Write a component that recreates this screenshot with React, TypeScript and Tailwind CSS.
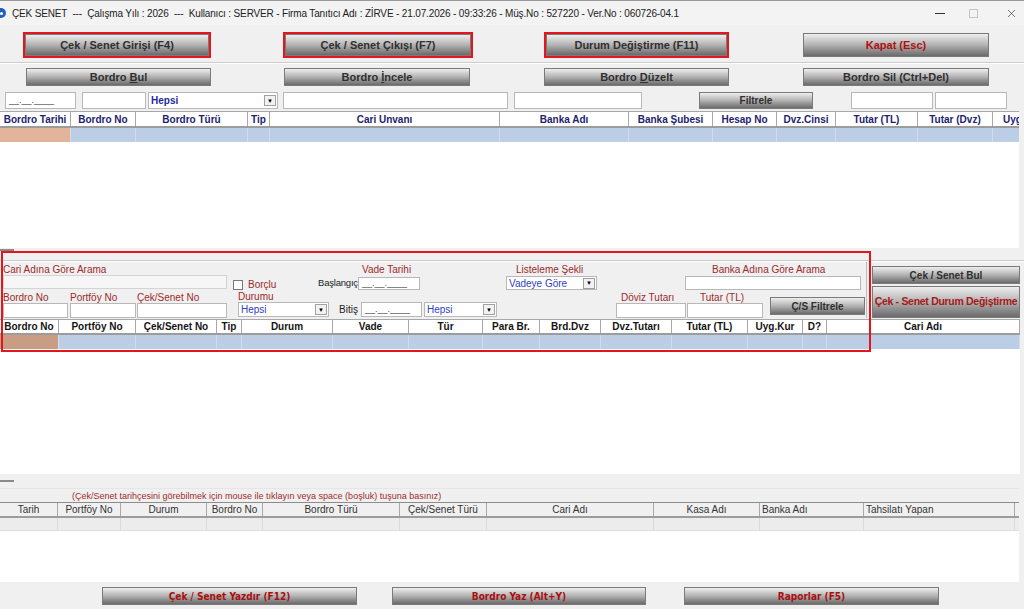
import { X } from "lucide-react";
import type { ReactNode } from "react";

// Delphi-style "ÇEK SENET" form, laid out row by row.

const topCols = [
  "Bordro Tarihi", "Bordro No", "Bordro Türü", "Tip", "Cari Unvanı", "Banka Adı",
  "Banka Şubesi", "Hesap No", "Dvz.Cinsi", "Tutar (TL)", "Tutar (Dvz)", "Uyg.Kur",
];
const midCols = [
  "Bordro No", "Portföy No", "Çek/Senet No", "Tip", "Durum", "Vade", "Tür", "Para Br.",
  "Brd.Dvz", "Dvz.Tutarı", "Tutar (TL)", "Uyg.Kur", "D?", "Cari Adı",
];
const histCols = [
  "Tarih", "Portföy No", "Durum", "Bordro No", "Bordro Türü", "Çek/Senet Türü",
  "Cari Adı", "Kasa Adı", "Banka Adı", "Tahsilatı Yapan",
];

function Btn({
  children,
  className = "",
  tone = "text-[#303030]",
}: {
  children: ReactNode;
  className?: string;
  tone?: string;
}) {
  return (
    <div
      className={`flex items-center justify-center overflow-hidden whitespace-nowrap border border-[#7a7a7a] bg-linear-to-b from-[#eeeeee] via-[#b2b2b2] to-[#6b6b6b] font-bold ${tone} ${className}`}
    >
      {children}
    </div>
  );
}

function Field({ className = "", children }: { className?: string; children?: ReactNode }) {
  return (
    <div
      className={`flex items-center overflow-hidden whitespace-nowrap border border-[#b8b8b8] bg-white px-[3px] text-[9px] text-[#444] ${className}`}
    >
      {children}
    </div>
  );
}

function Combo({ value, className = "", bold = false }: { value: string; className?: string; bold?: boolean }) {
  return (
    <div className={`flex items-center border border-[#b8b8b8] bg-white ${className}`}>
      <span
        className={`flex-1 pl-[2px] text-[10px] ${bold ? "font-bold text-[#1e2a9c]" : "text-[#3040c0]"}`}
      >
        {value}
      </span>
      <span className="mr-[1px] flex h-[11px] w-[12px] items-center justify-center border border-[#a0a0a0] bg-[#f2f2f2] text-[6px] leading-none text-black">
        ▼
      </span>
    </div>
  );
}

const date = "__.__.____";

function Label({ children, className = "" }: { children: ReactNode; className?: string }) {
  return <div className={`h-[11px] whitespace-nowrap text-[10px] leading-[11px] text-[#9c2a2a] ${className}`}>{children}</div>;
}

export default function App() {
  return (
    <div className="flex h-[609px] w-[1024px] flex-col overflow-hidden bg-[#f0f0f0] font-['Liberation_Sans',Arial,sans-serif] text-[#222]">
      {/* title bar */}
      <div className="flex h-[25px] shrink-0 items-center border-t border-[#9a9a9a] bg-[#f3f3f3]">
        <div className="-ml-[4px] flex h-[10px] w-[10px] items-center justify-center rounded-full bg-[#1f5fbf]">
          <div className="h-[3px] w-[3px] rounded-full bg-white" />
        </div>
        <span className="ml-[6px] whitespace-nowrap text-[10px] tracking-[-0.15px] text-[#222]">
          ÇEK SENET &nbsp;--- &nbsp;Çalışma Yılı : 2026 &nbsp;--- &nbsp;Kullanıcı : SERVER - Firma Tanıtıcı Adı : ZİRVE - 21.07.2026 - 09:33:26 - Müş.No : 527220 - Ver.No : 060726-04.1
        </span>
        <div className="ml-auto flex items-center">
          <div className="h-px w-[10px] bg-[#333]" />
          <div className="ml-[24px] h-[9px] w-[9px] border border-[#c4c4c4]" />
          <X className="ml-[27px] mr-[6px] h-[13px] w-[13px] text-[#333]" strokeWidth={1.2} />
        </div>
      </div>

      {/* main action buttons */}
      <div className="mt-[7px] flex h-[26px] shrink-0 pl-[23px]">
        <div className="w-[188px] border-2 border-[#e3161d]">
          <Btn className="h-full text-[11px]">Çek / Senet Girişi (F4)</Btn>
        </div>
        <div className="ml-[72px] w-[190px] border-2 border-[#e3161d]">
          <Btn className="h-full text-[11px]">Çek / Senet Çıkışı (F7)</Btn>
        </div>
        <div className="ml-[71px] w-[185px] border-2 border-[#e3161d]">
          <Btn className="h-full text-[11px]">Durum Değiştirme (F11)</Btn>
        </div>
        <div className="ml-[74px] w-[186px] py-[1px]">
          <Btn className="h-full text-[11px]" tone="text-[#b01010]">
            Kapat (Esc)
          </Btn>
        </div>
      </div>

      <div className="mt-[4px] h-[2px] shrink-0 border-t border-b border-t-[#cdcdcd] border-b-white" />

      {/* bordro buttons */}
      <div className="mt-[4px] flex h-[18px] shrink-0 pl-[26px] text-[11px]">
        <Btn className="w-[185px]">
          Bordro&nbsp;<span className="underline">B</span>ul
        </Btn>
        <Btn className="ml-[73px] w-[186px]">
          Bordro&nbsp;<span className="underline">İ</span>ncele
        </Btn>
        <Btn className="ml-[74px] w-[185px]">
          Bordro&nbsp;<span className="underline">D</span>üzelt
        </Btn>
        <Btn className="ml-[74px] w-[186px]">Bordro Sil (Ctrl+Del)</Btn>
      </div>

      {/* bordro filters */}
      <div className="mt-[6px] flex h-[17px] shrink-0 pl-[5px]">
        <Field className="w-[71px]">{date}</Field>
        <Field className="ml-[6px] w-[64px]" />
        <Combo value="Hepsi" bold className="ml-[2px] w-[130px]" />
        <Field className="ml-[5px] w-[225px]" />
        <Field className="ml-[6px] w-[128px]" />
        <Btn className="ml-[57px] w-[114px] text-[10px]">Filtrele</Btn>
        <Field className="ml-[38px] w-[82px]" />
        <Field className="ml-[2px] w-[72px]" />
      </div>

      {/* bordro grid */}
      <div className="mt-[2px] flex h-[137px] w-[1019px] shrink-0 flex-col overflow-hidden border-t border-[#a8a8a8] bg-white">
        <div className="grid h-[16px] shrink-0 grid-cols-[71px_65px_112px_22px_230px_129px_84px_64px_59px_82px_75px_60px] border-b-2 border-[#9c9c9c] text-[10px] font-bold text-[#1e2370]">
          {topCols.map((c) => (
            <div key={c} className="flex items-center justify-center overflow-hidden whitespace-nowrap border-r border-[#a8a8a8]">
              {c}
            </div>
          ))}
        </div>
        <div className="grid h-[14px] shrink-0 grid-cols-[71px_65px_112px_22px_230px_129px_84px_64px_59px_82px_75px_60px]">
          {topCols.map((c, i) => (
            <div key={c} className={`border-r border-[#d3dcea] ${i === 0 ? "bg-[#e3b49c]" : "bg-[#bccde6]"}`} />
          ))}
        </div>
      </div>

      {/* splitter */}
      <div className="flex h-[3px] shrink-0 items-center">
        <div className="h-[2px] w-[14px] bg-[#8a8a8a]" />
      </div>

      {/* cek/senet search + grid */}
      <div className="relative flex shrink-0 flex-col">
        <div className="mt-[9px] h-[2px] border-t border-b border-t-[#cacaca] border-b-white" />
        <div className="flex h-[56px]">
          <div className="flex w-[866px] flex-col">
            {/* row A */}
            <div className="flex h-[28px] items-start">
              <div className="ml-[3px] flex w-[224px] flex-col">
                <Label className="mt-[2px]">Cari Adına Göre Arama</Label>
                <div className="h-[14px] border border-[#d4d4d4] bg-[#f6f6f6]" />
              </div>
              <div className="ml-[6px] mt-[15px] flex w-[44px] items-center">
                <div className="h-[10px] w-[10px] border border-[#7a7a7a] bg-white" />
                <span className="ml-[5px] text-[10px] text-[#9c2a2a]">Borçlu</span>
              </div>
              <div className="ml-[41px] flex flex-col">
                <Label className="mt-[2px] pl-[44px]">Vade Tarihi</Label>
                <div className="mt-[2px] flex h-[13px] items-center">
                  <span className="w-[40px] whitespace-nowrap text-[9.5px] tracking-[-0.2px] text-[#222]">Başlangıç</span>
                  <Field className="h-full w-[62px]">{date}</Field>
                </div>
              </div>
              <div className="ml-[86px] flex w-[91px] flex-col">
                <Label className="mt-[2px] pl-[10px]">Listeleme Şekli</Label>
                <Combo value="Vadeye Göre" className="mt-[1px] h-[14px]" />
              </div>
              <div className="ml-[88px] flex w-[176px] flex-col">
                <Label className="mt-[2px] pl-[27px]">Banka Adına Göre Arama</Label>
                <div className="mt-[1px] h-[14px] border border-[#b8b8b8] bg-white" />
              </div>
            </div>
            {/* row B */}
            <div className="flex h-[28px] items-start">
              <div className="ml-[3px] flex w-[65px] flex-col">
                <Label className="mt-[2px]">Bordro No</Label>
                <Field className="h-[15px]" />
              </div>
              <div className="ml-[2px] flex w-[66px] flex-col">
                <Label className="mt-[2px]">Portföy No</Label>
                <Field className="h-[15px]" />
              </div>
              <div className="ml-[1px] flex w-[90px] flex-col">
                <Label className="mt-[2px]">Çek/Senet No</Label>
                <Field className="h-[15px]" />
              </div>
              <div className="ml-[11px] flex w-[91px] flex-col">
                <Label className="mt-[1px]">Durumu</Label>
                <Combo value="Hepsi" className="h-[15px]" />
              </div>
              <div className="ml-[10px] mt-[12px] flex h-[15px] items-center">
                <span className="w-[22px] text-[10px]">Bitiş</span>
                <Field className="h-full w-[61px]">{date}</Field>
              </div>
              <Combo value="Hepsi" className="ml-[2px] mt-[12px] h-[15px] w-[73px]" />
              <div className="ml-[119px] flex w-[70px] flex-col">
                <Label className="mt-[2px] pl-[5px]">Döviz Tutarı</Label>
                <Field className="h-[15px]" />
              </div>
              <div className="ml-[1px] flex w-[76px] flex-col">
                <Label className="mt-[2px] pl-[13px]">Tutar (TL)</Label>
                <Field className="h-[15px]" />
              </div>
              <Btn className="ml-[7px] mt-[7px] h-[18px] w-[95px] text-[10px]">Ç/S Filtrele</Btn>
            </div>
          </div>
          <div className="flex flex-1 flex-col border-l border-[#bdbdbd] pl-[5px]">
            <Btn className="mt-[4px] h-[18px] w-[148px] text-[10px]">Çek / Senet Bul</Btn>
            <Btn className="mt-[2px] h-[32px] w-[148px] text-[10.5px] tracking-[-0.3px]" tone="text-[#a81818]">
              Çek - Senet Durum Değiştirme
            </Btn>
          </div>
        </div>

        {/* cek/senet grid */}
        <div className="mt-px flex h-[155px] w-[1020px] flex-col overflow-hidden border-t border-[#a8a8a8] bg-white">
          <div className="grid h-[15px] shrink-0 grid-cols-[59px_77px_81px_25px_91px_76px_74px_57px_61px_71px_76px_55px_24px_193px] border-b-2 border-[#9c9c9c] text-[10px] font-bold text-[#151515]">
            {midCols.map((c) => (
              <div key={c} className="flex items-center justify-center overflow-hidden whitespace-nowrap border-r border-[#a8a8a8]">
                {c}
              </div>
            ))}
          </div>
          <div className="grid h-[14px] shrink-0 grid-cols-[59px_77px_81px_25px_91px_76px_74px_57px_61px_71px_76px_55px_24px_193px]">
            {midCols.map((c, i) => (
              <div key={c} className={`border-r border-[#d3dcea] ${i === 0 ? "bg-[#c99c84]" : "bg-[#bccde6]"}`} />
            ))}
          </div>
        </div>

        <div className="pointer-events-none absolute left-[1px] top-0 h-[101px] w-[870px] border-2 border-[#e3161d]" />
      </div>

      {/* history section */}
      <div className="flex h-[28px] shrink-0 flex-col">
        <div className="mt-[6px] h-[2px] w-[14px] bg-[#8a8a8a]" />
        <div className="mt-[6px] h-px w-[1019px] bg-[#e6e6e6]" />
        <div className="mt-[1px] pl-[72px] text-[9px] leading-[12px] text-[#a12a2a]">
          (Çek/Senet tarihçesini görebilmek için mouse ile tıklayın veya space (boşluk) tuşuna basınız)
        </div>
      </div>
      <div className="flex h-[80px] w-[1019px] shrink-0 flex-col border-t border-[#8c8c8c]">
        <div className="grid h-[15px] shrink-0 grid-cols-[58px_63px_86px_56px_137px_87px_167px_106px_104px_151px] border-b-2 border-[#9c9c9c] text-[10px] text-[#333]">
          {histCols.map((c, i) => (
            <div
              key={c}
              className={`flex items-center overflow-hidden whitespace-nowrap border-r border-[#a8a8a8] ${i >= 8 ? "pl-[2px]" : "justify-center"}`}
            >
              {c}
            </div>
          ))}
        </div>
        <div className="grid h-[13px] shrink-0 grid-cols-[58px_63px_86px_56px_137px_87px_167px_106px_104px_151px] border-b border-[#dedede] bg-[#ececec]">
          {histCols.map((c) => (
            <div key={c} className="border-r border-[#dadada]" />
          ))}
        </div>
        <div className="flex-1 bg-white" />
      </div>

      {/* bottom buttons */}
      <div className="flex h-[27px] shrink-0 pl-[102px] pt-[5px] font-['DejaVu_Sans_Condensed','DejaVu_Sans',sans-serif] text-[10px]">
        <Btn className="h-[18px] w-[255px]" tone="text-[#a81010]">
          Çek / Senet Yazdır (F12)
        </Btn>
        <Btn className="ml-[35px] h-[18px] w-[254px]" tone="text-[#a81010]">
          Bordro Yaz (Alt+Y)
        </Btn>
        <Btn className="ml-[38px] h-[18px] w-[255px]" tone="text-[#a81010]">
          Raporlar (F5)
        </Btn>
      </div>
    </div>
  );
}
